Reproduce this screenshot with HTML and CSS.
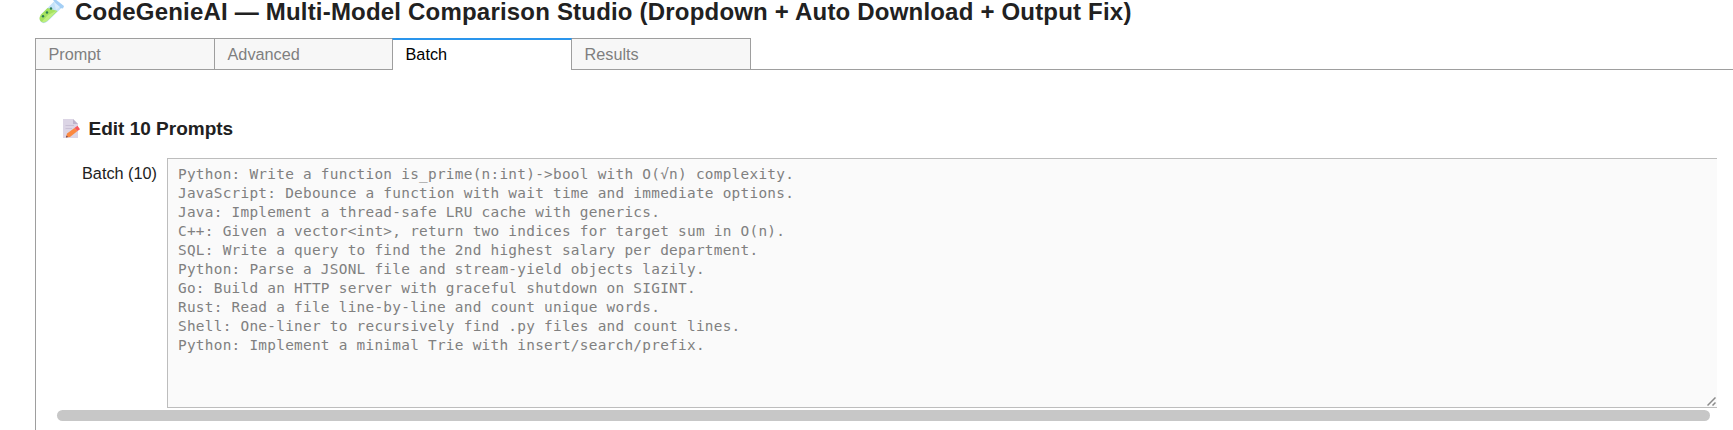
FILE: index.html
```
<!DOCTYPE html>
<html lang="en">
<head>
<meta charset="utf-8">
<title>CodeGenieAI</title>
<link rel="stylesheet" href="styles.css">
</head>
<body>
<header class="title">
  <svg class="title-icon" width="25" height="24" viewBox="0 0 25 24">
    <path d="M15.500 1 22.500 8 8.500 21.500Q4.500 24.500 2 22T2 14.500Z" fill="#c3e2f8"/>
    <path d="M8.500 8 18.500 11 8.500 20.500Q5 24 2 21.500T2 14.500Z" fill="#a5e260"/>
    <path d="M9 15 18 10.500 8.500 20.500Q5.500 23 3 21.500Z" fill="#bff080"/>
    <path d="M14 0 16 -1 25 6 24 8.500 21 8Z" fill="#a4cff5"/>
    <path d="M15 2 21 7 17 10Z" fill="#d8ecfc"/>
    <circle cx="4" cy="16.300" r="1.200" fill="#2c7c55"/>
    <circle cx="8" cy="12.500" r="1.200" fill="#2c7c55"/>
    <circle cx="12" cy="8.500" r="1.200" fill="#2c7c55"/>
  </svg>
  <h1 class="title-text">CodeGenieAI — Multi-Model Comparison Studio (Dropdown + Auto Download + Output Fix)</h1>
</header>
<nav class="tabs">
  <div class="tab">Prompt</div>
  <div class="tab">Advanced</div>
  <div class="tab tab-active">Batch</div>
  <div class="tab">Results</div>
</nav>
<main class="panel">
  <div class="section">
    <svg class="section-icon" width="18" height="20" viewBox="0 0 18 20">
      <path d="M0 0H10L15 5V19H0Z" fill="#dcd5e5"/>
      <path d="M10 0 15 5H10Z" fill="#bdb3cb"/>
      <path d="M2.500 6.500H11M2.500 9.500H9" stroke="#c9c0d5"/>
      <path d="M3 18.500 4 14.500 11.500 9 14.500 12 7 18Z" fill="#fb8940"/>
      <path d="M11.500 9 14.500 6.800 17 10.200 14.500 12Z" fill="#f9565c"/>
      <path d="M3 18.500 3.500 16.500 5 18Z" fill="#5b3b50"/>
    </svg>
    <h2 class="section-text">Edit 10 Prompts</h2>
  </div>
  <div class="field">
    <label class="field-label" for="batch">Batch (10)</label>
    <div class="field-box">
      <textarea class="field-input" id="batch" spellcheck="false" disabled>Python: Write a function is_prime(n:int)-&gt;bool with O(√n) complexity.
JavaScript: Debounce a function with wait time and immediate options.
Java: Implement a thread-safe LRU cache with generics.
C++: Given a vector&lt;int&gt;, return two indices for target sum in O(n).
SQL: Write a query to find the 2nd highest salary per department.
Python: Parse a JSONL file and stream-yield objects lazily.
Go: Build an HTTP server with graceful shutdown on SIGINT.
Rust: Read a file line-by-line and count unique words.
Shell: One-liner to recursively find .py files and count lines.
Python: Implement a minimal Trie with insert/search/prefix.</textarea>
      <svg class="grip" width="9" height="9" viewBox="0 0 9 9">
        <path d="M.5 8.500 8.500 .5M5.500 8.500 8.500 5.500" fill="none" stroke="#8a8a8a" stroke-width="1.500"/>
      </svg>
    </div>
  </div>
  <div class="scrollbar"></div>
</main>
</body>
</html>
```
FILE: styles.css
```
* {
  box-sizing: border-box;
}
body {
  margin: 0;
  height: 430px;
  overflow: hidden;
  display: flex;
  flex-direction: column;
  background: #fff;
  font: 16.25px/20px "Liberation Sans", Arial, sans-serif;
}
.title {
  display: flex;
  height: 38px;
  padding-left: 39px;
  gap: 11px;
  color: #212121;
}
.title-icon {
  flex: none;
}
.title-text {
  margin: -2px 0 0;
  font-size: 24px;
  line-height: 28px;
  letter-spacing: 0.195px;
  white-space: nowrap;
}
.tabs {
  display: flex;
  height: 32px;
  padding-left: 35px;
  background: linear-gradient(#9e9e9e, #9e9e9e) 35px 31px / 100% 1px no-repeat;
}
.tab {
  width: 180px;
  height: 32px;
  margin-right: -1px;
  padding: 5px 12.5px 0;
  border: 1px solid #9e9e9e;
  background: #f7f7f7;
  color: #7f7f7f;
}
.tab:nth-child(2) {
  width: 179px;
}
.tab-active {
  z-index: 1;
  padding-top: 4px;
  border-top: 2px solid #2a95ec;
  border-bottom: 0;
  background: #fff;
  color: #000;
}
.panel {
  flex: 1;
  margin-left: 35px;
  border-left: 1px solid #9e9e9e;
  padding: 49px 16px 0 21px;
}
.section {
  display: flex;
  height: 39px;
  padding-left: 6px;
  gap: 7.5px;
  color: #212121;
}
.section-icon {
  flex: none;
}
.section-text {
  margin: -2px 0 0;
  font-size: 19px;
  line-height: 24px;
  white-space: nowrap;
}
.field {
  display: flex;
  height: 250px;
}
.field-label {
  width: 110px;
  padding: 5px 10px 0 0;
  text-align: right;
  white-space: nowrap;
  color: #212121;
}
.field-box {
  position: relative;
  flex: 1;
}
.field-input {
  display: block;
  width: 100%;
  height: 250px;
  margin: 0;
  padding: 6px 10px;
  border: 1px solid #bdbdbd;
  border-right: 0;
  border-radius: 0;
  resize: none;
  background: #fafafa;
  color: #808080;
  font: 14.4px/19px "DejaVu Sans Mono", monospace;
  letter-spacing: 0.265px;
}
.grip {
  position: absolute;
  right: 1px;
  bottom: 2px;
}
.scrollbar {
  width: 1653px;
  height: 11px;
  margin-top: 2px;
  border-radius: 6px;
  background: #c7c7c7;
}
```
